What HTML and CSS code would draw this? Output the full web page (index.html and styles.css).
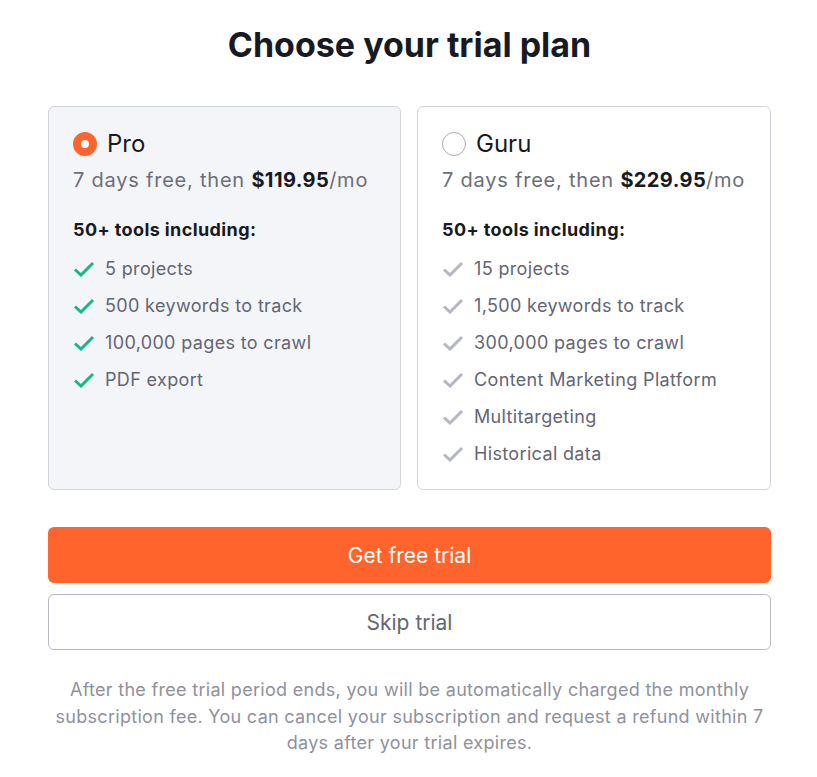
FILE: index.html
```html
<!DOCTYPE html>
<html>
<head>
<meta charset="utf-8">
<link rel="stylesheet" href="styles.css">
</head>
<body>
<div class="page">
  <h1 class="title">Choose your trial plan</h1>
  <div class="plans">
    <div class="plan selected">
      <div class="plan-head">
        <span class="radio on"></span>
        <span class="plan-name">Pro</span>
      </div>
      <div class="price">7 days free, then <b>$119.95</b>/mo</div>
      <div class="tools">50+ tools including:</div>
      <ul class="features green">
        <li><svg class="check" viewBox="0 0 22 16"><path d="M2 8.5 L8 14 L20 2"/></svg>5 projects</li>
        <li><svg class="check" viewBox="0 0 22 16"><path d="M2 8.5 L8 14 L20 2"/></svg>500 keywords to track</li>
        <li><svg class="check" viewBox="0 0 22 16"><path d="M2 8.5 L8 14 L20 2"/></svg>100,000 pages to crawl</li>
        <li><svg class="check" viewBox="0 0 22 16"><path d="M2 8.5 L8 14 L20 2"/></svg>PDF export</li>
      </ul>
    </div>
    <div class="plan">
      <div class="plan-head">
        <span class="radio"></span>
        <span class="plan-name">Guru</span>
      </div>
      <div class="price">7 days free, then <b>$229.95</b>/mo</div>
      <div class="tools">50+ tools including:</div>
      <ul class="features grey">
        <li><svg class="check" viewBox="0 0 22 16"><path d="M2 8.5 L8 14 L20 2"/></svg>15 projects</li>
        <li><svg class="check" viewBox="0 0 22 16"><path d="M2 8.5 L8 14 L20 2"/></svg>1,500 keywords to track</li>
        <li><svg class="check" viewBox="0 0 22 16"><path d="M2 8.5 L8 14 L20 2"/></svg>300,000 pages to crawl</li>
        <li><svg class="check" viewBox="0 0 22 16"><path d="M2 8.5 L8 14 L20 2"/></svg>Content Marketing Platform</li>
        <li><svg class="check" viewBox="0 0 22 16"><path d="M2 8.5 L8 14 L20 2"/></svg>Multitargeting</li>
        <li><svg class="check" viewBox="0 0 22 16"><path d="M2 8.5 L8 14 L20 2"/></svg>Historical data</li>
      </ul>
    </div>
  </div>
  <button class="btn primary">Get free trial</button>
  <button class="btn secondary">Skip trial</button>
  <p class="note">After the free trial period ends, you will be automatically charged the monthly subscription fee. You can cancel your subscription and request a refund within 7 days after your trial expires.</p>
</div>
</body>
</html>
```

FILE: styles.css
```css
* { box-sizing: border-box; }
body {
  margin: 0;
  background: #ffffff;
  font-family: Inter, "Noto Sans", sans-serif;
  color: #171a22;
}
.page {
  width: 723px;
  margin: 0 46px 0 48px;
  display: flex;
  flex-direction: column;
}
.title {
  margin: 25px 0 41px;
  font-size: 34px;
  line-height: 40px;
  font-weight: 700;
  text-align: center;
  letter-spacing: 0;
  color: #171a22;
}
.plans {
  display: grid;
  grid-template-columns: 353px 354px;
  gap: 16px;
}
.plan {
  border: 1px solid #d1d4db;
  border-radius: 6px;
  padding: 23px 24px 23px;
  background: #fff;
}
.plan.selected { background: #f4f5f8; }
.plan-head {
  display: flex;
  align-items: center;
  gap: 10px;
  height: 28px;
}
.radio {
  width: 24px;
  height: 24px;
  border-radius: 50%;
  border: 1px solid #a9acb8;
  background: #fff;
  flex: none;
}
.radio.on {
  border: 8px solid #ff642d;
  background: #fff;
}
.plan-name {
  font-size: 24px;
  line-height: 28px;
  color: #171a22;
}
.price {
  margin-top: 8px;
  font-size: 20px;
  line-height: 28px;
  letter-spacing: 0.78px;
  color: #6c6e79;
}
.price b { color: #171a22; font-weight: 700; letter-spacing: 0.4px; }
.tools {
  margin-top: 24px;
  font-size: 18px;
  line-height: 24px;
  font-weight: 700;
  letter-spacing: 0.4px;
  color: #171a22;
}
.features {
  list-style: none;
  margin: 15px 0 0;
  padding: 0;
  display: flex;
  flex-direction: column;
  gap: 13px;
}
.features li {
  display: flex;
  align-items: center;
  font-size: 18px;
  line-height: 24px;
  letter-spacing: 0.35px;
  color: #636673;
}
.check {
  width: 22px;
  height: 16px;
  margin-right: 10px;
  flex: none;
}
.check path {
  fill: none;
  stroke-width: 3;
  stroke-linecap: butt;
  stroke-linejoin: miter;
}
.green .check path { stroke: #13b98c; }
.grey .check path { stroke: #b4b7c2; }
.btn {
  display: block;
  width: 100%;
  height: 56px;
  border-radius: 6px;
  font-family: Inter, "Noto Sans", sans-serif;
  font-size: 21px;
  cursor: pointer;
}
.primary {
  margin-top: 37px;
  background: #ff642d;
  border: none;
  color: #fff;
}
.secondary {
  margin-top: 11px;
  background: #fff;
  border: 1px solid #b7bac5;
  color: #636673;
}
.note {
  margin: 27px 0 0;
  font-size: 18px;
  line-height: 26.5px;
  letter-spacing: 0.3px;
  text-align: center;
  color: #8f919d;
  padding: 0 4px;
}
```
